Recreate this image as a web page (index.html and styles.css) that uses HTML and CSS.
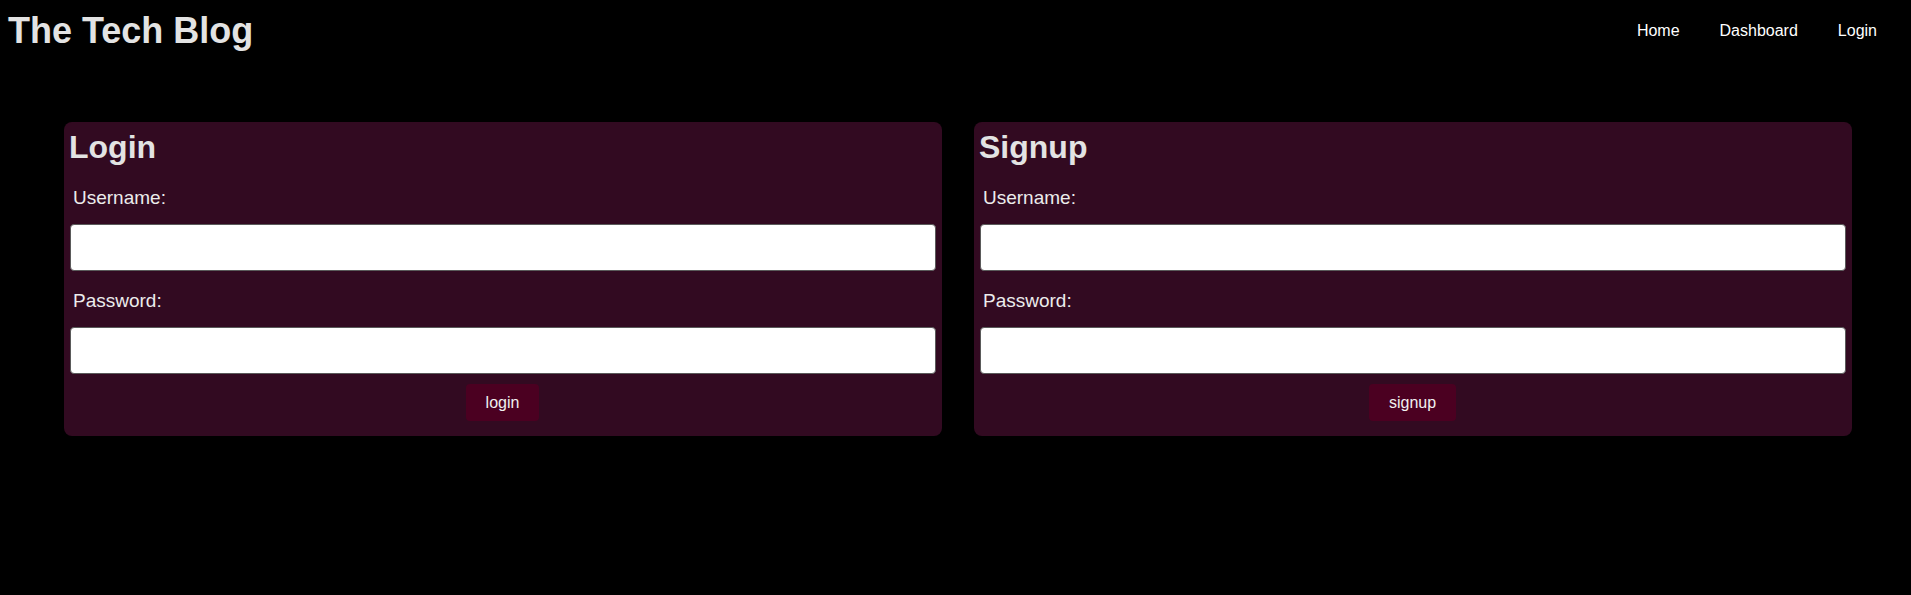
FILE: index.html
```html
<!DOCTYPE html>
<html lang="en">
<head>
<meta charset="utf-8">
<title>The Tech Blog</title>
<link rel="stylesheet" href="styles.css">
</head>
<body>
  <header class="site-header">
    <h1 class="site-title">The Tech Blog</h1>
    <nav class="site-nav">
      <a href="#" class="nav-link">Home</a>
      <a href="#" class="nav-link">Dashboard</a>
      <a href="#" class="nav-link">Login</a>
    </nav>
  </header>
  <main class="auth">
    <form class="card">
      <h2 class="card-title">Login</h2>
      <label class="field-label" for="login-user">Username:</label>
      <input class="field-input" id="login-user" type="text">
      <label class="field-label" for="login-pass">Password:</label>
      <input class="field-input" id="login-pass" type="password">
      <button class="btn" type="button">login</button>
    </form>
    <form class="card">
      <h2 class="card-title">Signup</h2>
      <label class="field-label" for="signup-user">Username:</label>
      <input class="field-input" id="signup-user" type="text">
      <label class="field-label" for="signup-pass">Password:</label>
      <input class="field-input" id="signup-pass" type="password">
      <button class="btn" type="button">signup</button>
    </form>
  </main>
</body>
</html>
```
FILE: styles.css
```css
* { box-sizing: border-box; }

body {
  margin: 0;
  background: #000;
  font-family: "Liberation Sans", Arial, sans-serif;
  color: #e3e3e3;
}

.site-header {
  display: flex;
  align-items: center;
  justify-content: space-between;
  padding: 11px 14px 0 8px;
}

.site-title {
  margin: 0;
  font-size: 36px;
  line-height: 40px;
  font-weight: bold;
  color: #e3e3e3;
}

.site-nav {
  display: flex;
}

.nav-link {
  padding: 0 20px;
  font-size: 16px;
  line-height: 18px;
  color: #fff;
  text-decoration: none;
}

.auth {
  display: flex;
  gap: 32px;
  padding: 71px 59px 0 64px;
  align-items: flex-start;
}

.card {
  flex: 1;
  display: flex;
  flex-direction: column;
  background: #320a21;
  border-radius: 8px;
  padding: 7px 6px 5px 5px;
}

.card-title {
  margin: 0 0 2px;
  font-size: 32px;
  line-height: 37px;
  font-weight: bold;
  color: #e3e3e3;
}

.field-label {
  display: block;
  margin: 19px 0 15px 4px;
  font-size: 19px;
  line-height: 22px;
  color: #ececec;
}

.field-input {
  display: block;
  width: calc(100% - 1px);
  margin-left: 1px;
  height: 47px;
  border: 1px solid #5a5a5a;
  border-radius: 4px;
  background: #fff;
  font-size: 16px;
  padding: 0 8px;
}

.btn {
  align-self: center;
  margin: 10px 0;
  padding: 10px 20px;
  border: none;
  border-radius: 4px;
  background: #4b0021;
  color: #f0f0f0;
  font-family: "Liberation Sans", Arial, sans-serif;
  font-size: 16px;
  line-height: 17px;
}
```
